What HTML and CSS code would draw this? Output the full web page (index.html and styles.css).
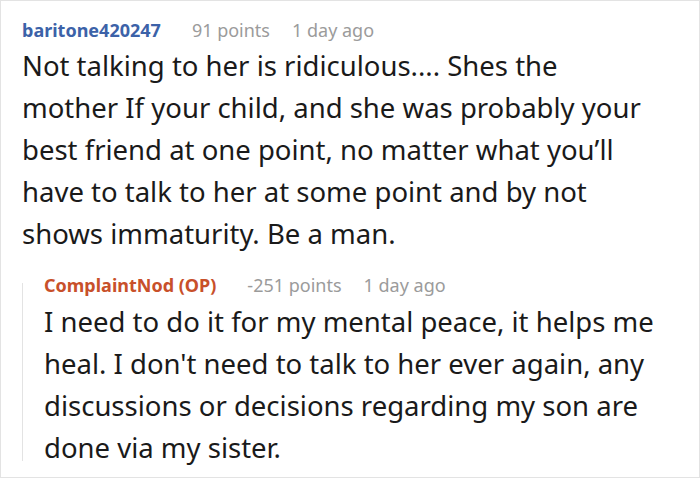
FILE: index.html
```html
<!DOCTYPE html>
<html lang="en">
<head>
<meta charset="utf-8">
<title>Comment</title>
<link rel="stylesheet" href="styles.css">
</head>
<body>
<div class="thread">
  <div class="comment">
    <div class="meta">
      <span class="author">baritone420247</span>
      <span class="points">91 points</span>
      <span class="time">1 day ago</span>
    </div>
    <p class="text">Not talking to her is ridiculous.... Shes the mother If your child, and she was probably your best friend at one point, no matter what you’ll have to talk to her at some point and by not shows immaturity. Be a man.</p>
  </div>
  <div class="reply">
    <div class="meta">
      <span class="author op">ComplaintNod (OP)</span>
      <span class="points">-251 points</span>
      <span class="time">1 day ago</span>
    </div>
    <p class="text">I need to do it for my mental peace, it helps me heal. I don't need to talk to her ever again, any discussions or decisions regarding my son are done via my sister.</p>
  </div>
</div>
</body>
</html>
```
FILE: styles.css
```css
html, body {
  margin: 0;
  padding: 0;
  background: #fff;
}
.thread {
  box-sizing: border-box;
  width: 700px;
  height: 478px;
  border: 1px solid #e3e3e3;
  padding: 17px 40px 0 21px;
  font-family: "Noto Sans", "Open Sans", sans-serif;
  color: #1a1a1a;
}
.meta {
  display: flex;
  align-items: baseline;
  font-size: 18px;
  line-height: 24px;
  white-space: nowrap;
}
.author {
  font-weight: 700;
  color: #3c62a8;
  margin-right: 31px;
}
.author.op {
  color: #c8502a;
}
.points, .time {
  color: #9b9b9b;
}
.points {
  margin-right: 22px;
}
.text {
  margin: 3px 0 0;
  font-size: 27.5px;
  line-height: 42px;
}
.reply {
  position: relative;
  margin-top: 18px;
  padding-left: 22px;
}
.reply::before {
  content: "";
  position: absolute;
  left: 0;
  top: 10px;
  bottom: 8px;
  width: 1px;
  background: #e3e3e3;
}
.reply .text {
  margin-top: 4px;
}
```
